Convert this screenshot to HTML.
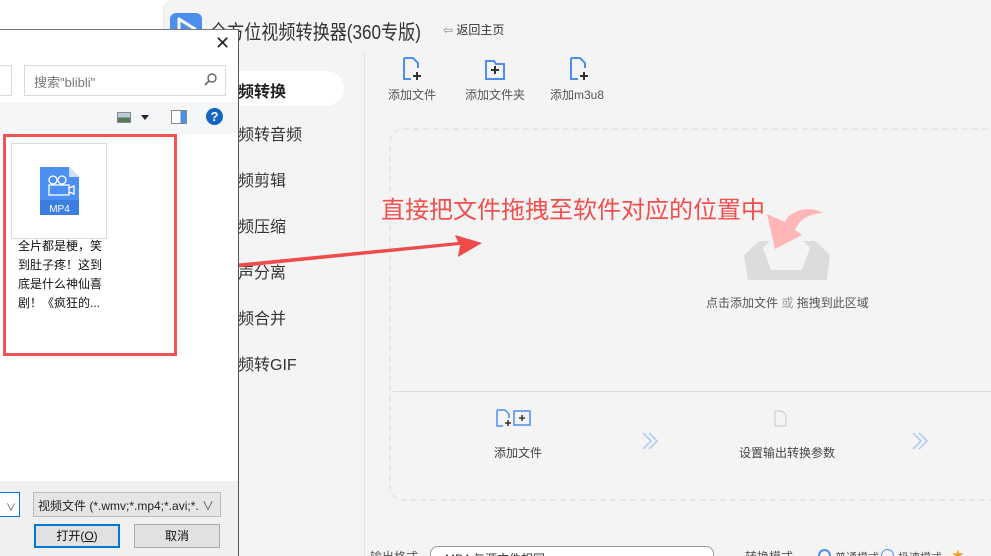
<!DOCTYPE html>
<html><head><meta charset="utf-8"><style>
*{margin:0;padding:0;box-sizing:border-box}
html,body{width:991px;height:556px;overflow:hidden}
body{background:#fff;position:relative;font-family:"Liberation Sans","Noto Sans CJK SC",sans-serif;}
.a{position:absolute;white-space:nowrap}
</style></head><body>
<!-- app window -->
<div class="a" style="left:163px;top:0;width:828px;height:556px;background:#f4f4f4;border-radius:10px 0 0 0;border-left:1px solid #e6e6e6;"></div>
<div class="a" style="left:170px;top:13px;width:32px;height:32px;background:#4d8ff0;border-radius:6px;"></div>
<svg class="a" style="left:170px;top:13px" width="32" height="32"><path d="M9 6 L9 27 L25 16 Z" fill="none" stroke="#fff" stroke-width="3" stroke-linejoin="round"/></svg>
<div class="a" style="left:210px;top:16px;font-size:20px;color:#333;transform:scaleX(0.855);transform-origin:0 0">全方位视频转换器(360专版)</div>
<div class="a" style="left:443px;top:21px;font-size:12px;color:#333;"><span style="color:#888;font-family:'DejaVu Sans'">⇦</span> 返回主页</div>
<!-- sidebar -->
<div class="a" style="left:163px;top:71px;width:181px;height:35px;background:#fff;border-radius:0 18px 18px 0;"></div>
<div class="a" style="left:222px;top:78px;font-size:16px;font-weight:bold;color:#222;">视频转换</div>
<div class="a" style="left:222px;top:125px;font-size:16px;color:#333;line-height:22px">视频转音频</div>
<div class="a" style="left:222px;top:171px;font-size:16px;color:#333;line-height:22px">视频剪辑</div>
<div class="a" style="left:222px;top:217px;font-size:16px;color:#333;line-height:22px">视频压缩</div>
<div class="a" style="left:222px;top:263px;font-size:16px;color:#333;line-height:22px">人声分离</div>
<div class="a" style="left:222px;top:309px;font-size:16px;color:#333;line-height:22px">视频合并</div>
<div class="a" style="left:222px;top:355px;font-size:16px;color:#333;line-height:22px">视频转GIF</div>
<div class="a" style="left:364px;top:52px;width:1px;height:504px;background:#e2e2e2"></div>
<!-- toolbar -->
<svg class="a" style="left:400px;top:56px" width="230" height="26">
<g fill="none" stroke="#4d8ff0" stroke-width="2"><path d="M4 2 H13 L18 7 V12 M4 2 V23 H11"/><path d="M86 5 H94 L96 8 H104 V23 H86 Z"/><path d="M171 2 H180 L185 7 V12 M171 2 V23 H178"/></g>
<g stroke="#333" stroke-width="2"><path d="M13 20 H21 M17 16 V24 M91 14 H99 M95 10 V18 M180 20 H188 M184 16 V24"/></g></svg>
<div class="a" style="left:388px;top:86px;font-size:12px;color:#555;">添加文件</div>
<div class="a" style="left:465px;top:86px;font-size:12px;color:#555;">添加文件夹</div>
<div class="a" style="left:550px;top:86px;font-size:12px;color:#555;">添加m3u8</div>
<!-- drop zone -->
<div class="a" style="left:389px;top:128px;width:640px;height:373px;border:2px dashed #e6e6e6;border-radius:14px;"></div>
<div class="a" style="left:393px;top:391px;width:600px;height:1px;background:#dedede"></div>
<svg class="a" style="left:0;top:0" width="991" height="556">
<path d="M759 241 L770 241 L763 248 L771 270 L802 270 L810 248 L803 241 L815 241 L830 255 L827 280 L748 280 L744 255 Z" fill="#dcdcdc"/>
<path d="M767 214 L775 249 L802 235 L795 230 C800 218 810 214 823 213 C810 205 790 210 785 222 Z" fill="#ffb6b6"/>
<path d="M192 272 L460 245 L458 257 L482 243 L455 235 L458 242 L192 268 Z" fill="#ef4b4b"/>
<g fill="none" stroke="#a8c8f5" stroke-width="1.5"><path d="M643 433 L651 441 L643 449 M649 433 L657 441 L649 449 M913 433 L921 441 L913 449 M919 433 L927 441 L919 449"/></g>
<g fill="none" stroke="#4d8ff0" stroke-width="1.5"><path d="M497 410 H505 L509 414 V418 M497 410 V426 H503"/><rect x="514" y="411" width="16" height="14"/></g>
<path d="M505 423 H511 M508 420 V426 M519 418 H525 M522 415 V421" stroke="#333" stroke-width="1.5"/>
<path d="M775 411 H782 L786 415 V426 H775 Z" fill="none" stroke="#c8c8c8"/>
</svg>
<div class="a" style="left:381px;top:190px;font-size:24px;color:#f34e4e;">直接把文件拖拽至软件对应的位置中</div>
<div class="a" style="left:706px;top:294px;font-size:12px;color:#555;">点击添加文件 <span style="color:#999">或</span> 拖拽到此区域</div>
<div class="a" style="left:494px;top:444px;font-size:12px;color:#444;">添加文件</div>
<div class="a" style="left:739px;top:444px;font-size:12px;color:#444;">设置输出转换参数</div>
<!-- bottom -->
<div class="a" style="left:370px;top:548px;font-size:12px;color:#555;">输出格式</div>
<div class="a" style="left:430px;top:546px;width:284px;height:26px;border:1px solid #999;border-radius:8px;background:#fff;font-size:12px;padding:3px 14px;color:#333">MP4 与源文件相同</div>
<div class="a" style="left:745px;top:548px;font-size:12px;color:#555;">转换模式</div>
<div class="a" style="left:818px;top:549px;width:13px;height:13px;border:2px solid #4d8ff0;border-radius:50%"></div>
<div class="a" style="left:835px;top:549px;font-size:11px;color:#555;">普通模式</div>
<div class="a" style="left:881px;top:549px;width:13px;height:13px;border:1px solid #4d8ff0;border-radius:50%"></div>
<div class="a" style="left:898px;top:549px;font-size:11px;color:#555;">极速模式</div>
<div class="a" style="left:952px;top:546px;font-size:12px;color:#f0a020;">★</div>
<!-- dialog -->
<div class="a" style="left:0;top:29px;width:239px;height:527px;background:#fff;border-right:1px solid #555;border-top:1px solid #777;"></div>
<div class="a" style="left:215px;top:33px;font-size:18px;color:#222;">✕</div>
<div class="a" style="left:-2px;top:65px;width:14px;height:31px;border:1px solid #d9d9d9"></div>
<div class="a" style="left:24px;top:65px;width:202px;height:31px;border:1px solid #d9d9d9;font-size:13px;color:#777;padding:6px 9px">搜索"blibli"</div>
<svg class="a" style="left:204px;top:72px" width="14" height="14"><circle cx="8" cy="6" r="4" fill="none" stroke="#666" stroke-width="1.4"/><path d="M5 9 L1 13" stroke="#666" stroke-width="1.6"/></svg>
<div class="a" style="left:0;top:102px;width:238px;height:32px;background:#f5f6f7;"></div>
<div class="a" style="left:117px;top:112px;width:14px;height:11px;border:1px solid #888;background:linear-gradient(#bcd 40%,#575 60%)"></div>
<div class="a" style="left:141px;top:115px;width:0;height:0;border:4px solid transparent;border-top:5px solid #223;"></div>
<div class="a" style="left:171px;top:110px;width:16px;height:14px;border:1px solid #888;background:linear-gradient(90deg,#fff 60%,#4a90e2 60%)"></div>
<div class="a" style="left:206px;top:108px;width:17px;height:17px;border-radius:50%;background:#1565c0;color:#fff;font-weight:bold;font-size:13px;text-align:center;line-height:17px">?</div>
<div class="a" style="left:3px;top:134px;width:174px;height:222px;border:3px solid #f05454;"></div>
<div class="a" style="left:11px;top:143px;width:96px;height:96px;border:1px solid #ddd;"></div>
<svg class="a" style="left:40px;top:167px" width="40" height="48"><path d="M0 0 H29 L39 10 V48 H0 Z" fill="#4d8ff0"/><path d="M29 0 V10 H39" fill="#cfe0fb"/><rect x="0" y="33" width="39" height="15" fill="#3b7de0"/><g fill="none" stroke="#fff" stroke-width="1.3"><circle cx="13" cy="13" r="4"/><circle cx="22" cy="13" r="4"/><rect x="9" y="18" width="20" height="10"/><path d="M29 21 L34 19 V27 L29 25"/></g><text x="19.5" y="45" fill="#fff" font-size="10" text-anchor="middle" font-family="Liberation Sans">MP4</text></svg>
<div class="a" style="left:18px;top:237px;font-size:12px;line-height:19px;color:#111;white-space:normal;width:90px">全片都是梗，笑到肚子疼！这到底是什么神仙喜剧！《疯狂的...</div>
<div class="a" style="left:0;top:481px;width:238px;height:75px;background:#f0f0f0;"></div>
<div class="a" style="left:-2px;top:492px;width:22px;height:25px;border:1px solid #0078d7;background:#fff;font-size:10px;color:#444;text-align:right;padding:6px 3px">∨</div>
<div class="a" style="left:33px;top:492px;width:188px;height:25px;border:1px solid #bbb;background:#e5e5e5;font-size:12px;color:#222;padding:4px 4px">视频文件 (*.wmv;*.mp4;*.avi;*. <span style="color:#555">∨</span></div>
<div class="a" style="left:34px;top:524px;width:86px;height:24px;border:2px solid #0078d7;background:#e1e1e1;font-size:12px;text-align:center;line-height:20px;color:#111">打开(<u>O</u>)</div>
<div class="a" style="left:134px;top:524px;width:86px;height:24px;border:1px solid #adadad;background:#e1e1e1;font-size:12px;text-align:center;line-height:22px;color:#111">取消</div>
</body></html>
